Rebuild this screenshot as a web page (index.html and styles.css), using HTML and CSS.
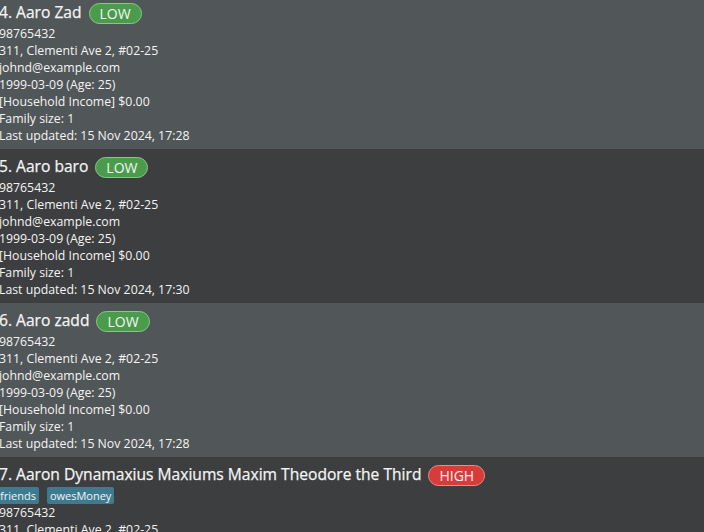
FILE: index.html
```html
<!DOCTYPE html>
<html>
<head>
<meta charset="utf-8">
<link rel="stylesheet" href="styles.css">
</head>
<body>
<div class="list">
  <div class="cell light">
    <div class="name-row"><span class="name">4. Aaro Zad</span><span class="badge low">LOW</span></div>
    <div class="line">98765432</div>
    <div class="line">311, Clementi Ave 2, #02-25</div>
    <div class="line">johnd@example.com</div>
    <div class="line">1999-03-09 (Age: 25)</div>
    <div class="line">[Household Income] $0.00</div>
    <div class="line">Family size: 1</div>
    <div class="line">Last updated: 15 Nov 2024, 17:28</div>
  </div>
  <div class="cell dark">
    <div class="name-row"><span class="name">5. Aaro baro</span><span class="badge low">LOW</span></div>
    <div class="line">98765432</div>
    <div class="line">311, Clementi Ave 2, #02-25</div>
    <div class="line">johnd@example.com</div>
    <div class="line">1999-03-09 (Age: 25)</div>
    <div class="line">[Household Income] $0.00</div>
    <div class="line">Family size: 1</div>
    <div class="line">Last updated: 15 Nov 2024, 17:30</div>
  </div>
  <div class="cell light">
    <div class="name-row"><span class="name">6. Aaro zadd</span><span class="badge low">LOW</span></div>
    <div class="line">98765432</div>
    <div class="line">311, Clementi Ave 2, #02-25</div>
    <div class="line">johnd@example.com</div>
    <div class="line">1999-03-09 (Age: 25)</div>
    <div class="line">[Household Income] $0.00</div>
    <div class="line">Family size: 1</div>
    <div class="line">Last updated: 15 Nov 2024, 17:28</div>
  </div>
  <div class="cell dark">
    <div class="name-row"><span class="name">7. Aaron Dynamaxius Maxiums Maxim Theodore the Third</span><span class="badge high">HIGH</span></div>
    <div class="tags"><span class="tag">friends</span><span class="tag">owesMoney</span></div>
    <div class="line">98765432</div>
    <div class="line">311, Clementi Ave 2, #02-25</div>
  </div>
</div>
</body>
</html>
```
FILE: styles.css
```css
html, body {
  margin: 0;
  padding: 0;
  background: #3c3e3f;
  overflow: hidden;
  height: 532px;
}
.list {
  margin-top: -5px;
  margin-left: -1px;
  font-family: "Open Sans", sans-serif;
  color: #f4f4f4;
}
.cell {
  height: 154px;
  box-sizing: border-box;
  padding: 4px 0 0 0;
}
.cell.light { background: #515658; }
.cell.dark { background: #3c3e3f; }
.name-row {
  display: flex;
  align-items: center;
  gap: 7px;
  height: 26px;
}
.name {
  font-size: 15.6px;
  font-weight: 500;
  -webkit-text-stroke: 0.25px #f4f4f4;
}
.badge {
  display: inline-flex;
  align-items: center;
  height: 19px;
  padding: 0 10px;
  border-radius: 11px;
  font-size: 14px;
  border: 1px solid;
  margin-top: 2px;
}
.badge.low {
  background: #4a9c4c;
  border-color: #86c986;
}
.badge.high {
  background: #d63c3a;
  border-color: #f08a84;
}
.line {
  font-size: 12.3px;
  line-height: 17px;
  height: 17px;
  white-space: nowrap;
}
.tags {
  display: flex;
  gap: 8px;
  height: 17px;
  align-items: center;
  margin-left: -2px;
}
.tag {
  background: #3e7b91;
  font-size: 11px;
  line-height: 17px;
  padding: 0 3px;
  border-radius: 2px;
}
```
